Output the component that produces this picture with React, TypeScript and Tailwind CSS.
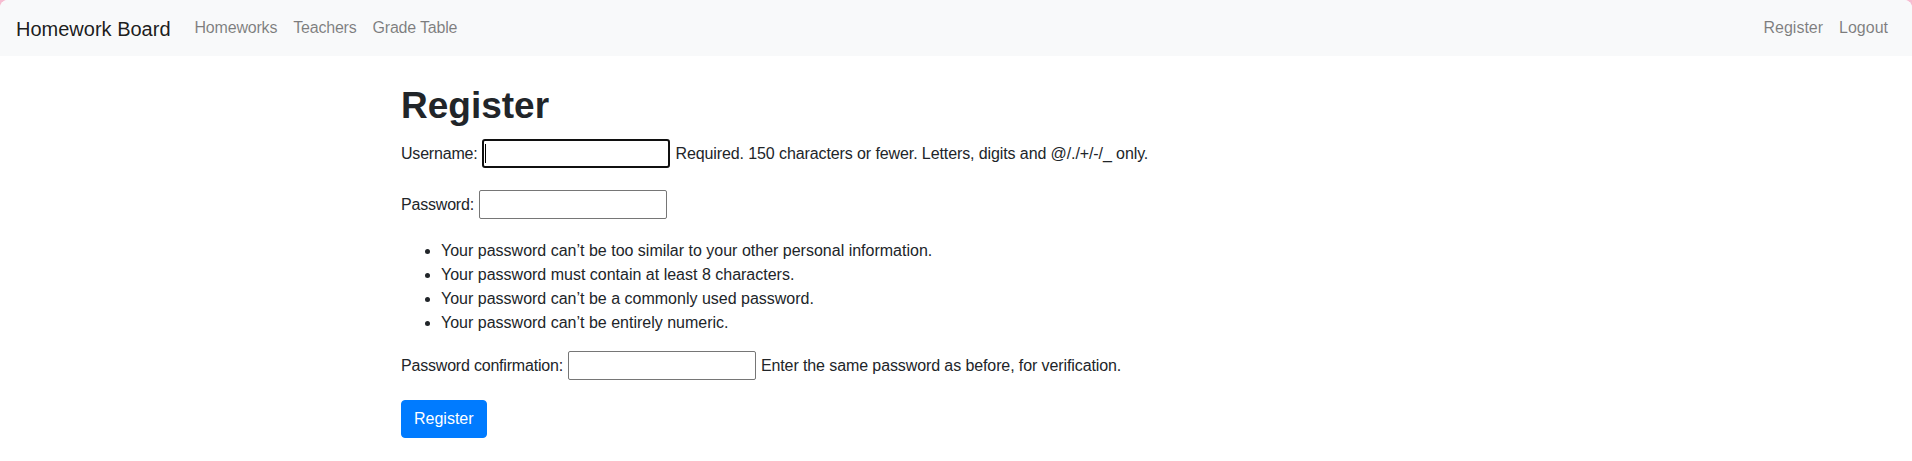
import React from 'react';

const navLinks = ['Homeworks', 'Teachers', 'Grade Table'];

const passwordRules = [
  "Your password can\u2019t be too similar to your other personal information.",
  'Your password must contain at least 8 characters.',
  "Your password can\u2019t be a commonly used password.",
  "Your password can\u2019t be entirely numeric.",
];

const Field = ({ label, focused, help }: { label: string; focused?: boolean; help?: string }) => (
  <div className="flex items-center gap-[5px] pt-[2px] pb-[4px] mb-4 leading-6">
    <label className="tracking-[-0.2px]">{label}</label>
    {focused ? (
      <div className="w-[188px] h-[29px] border-2 border-[#101010] rounded-[3px] bg-white flex items-center pl-[1px]">
        <span className="w-px h-[19px] bg-black" />
      </div>
    ) : (
      <input
        type="password"
        className="w-[188px] h-[29px] border border-[#767676] rounded-[2px] bg-white outline-none"
      />
    )}
    {help && <span className="tracking-[-0.1px]">{help}</span>}
  </div>
);

export default function App() {
  return (
    <div className="min-h-screen bg-[#f6bcd1] font-['Liberation_Sans',Arial,sans-serif] text-[#212529] text-base">
      <div className="min-h-[461px] bg-white rounded-t-[8px] overflow-hidden">
        <nav className="h-14 bg-[#f8f9fa] px-4 flex items-center justify-between">
          <div className="flex items-center">
            <a href="#" className="text-[20px] leading-[30px] pt-[2px] text-black/90 mr-4">
              Homework Board
            </a>
            <ul className="flex">
              {navLinks.map((l) => (
                <li key={l}>
                  <a href="#" className="block px-2 leading-6 text-black/50 tracking-[-0.2px]">
                    {l}
                  </a>
                </li>
              ))}
            </ul>
          </div>
          <ul className="flex">
            {['Register', 'Logout'].map((l) => (
              <li key={l}>
                <a href="#" className="block px-2 leading-6 text-black/50">
                  {l}
                </a>
              </li>
            ))}
          </ul>
        </nav>

        <main className="w-[1140px] mx-auto px-[15px] pt-[26px]">
          <h1 className="text-[37px] font-semibold leading-[48px] h-[48px] mb-[7px]">Register</h1>
          <form>
            <Field
              label="Username:"
              focused
              help="Required. 150 characters or fewer. Letters, digits and @/./+/-/_ only."
            />
            <Field label="Password:" />
            <ul className="list-disc pl-10 mb-[14px] leading-6 mt-[4px]">
              {passwordRules.map((r) => (
                <li key={r}>{r}</li>
              ))}
            </ul>
            <Field label="Password confirmation:" help="Enter the same password as before, for verification." />
            <button
              type="button"
              className="bg-[#007bff] border border-[#007bff] text-white rounded px-3 py-[6px] leading-6"
            >
              Register
            </button>
          </form>
        </main>
      </div>
    </div>
  );
}
